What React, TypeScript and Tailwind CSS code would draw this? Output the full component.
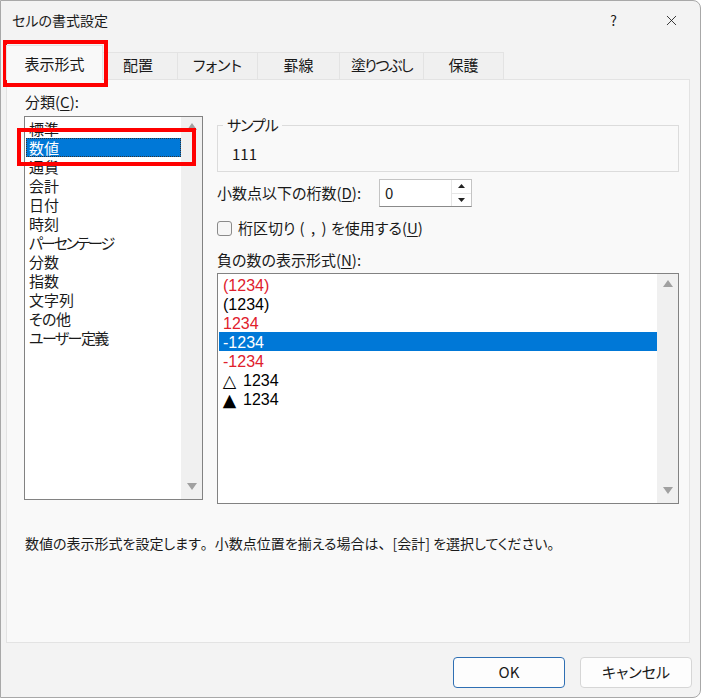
import { X } from "lucide-react"

const font = "font-['Noto_Sans_CJK_JP','Noto_Sans',sans-serif] [font-feature-settings:'palt']"

const tabs = [
  { label: "配置", w: "w-[75px]", track: "pr-[4px]" },
  { label: "フォント", w: "w-[80px]", track: "" },
  { label: "罫線", w: "w-[82px]", track: "" },
  { label: "塗りつぶし", w: "w-[84px]", track: "tracking-[-1.5px]" },
  { label: "保護", w: "w-[80px]", track: "" },
]

const categories = [
  { label: "標準", track: "" },
  { label: "数値", track: "" },
  { label: "通貨", track: "" },
  { label: "会計", track: "" },
  { label: "日付", track: "" },
  { label: "時刻", track: "" },
  { label: "パーセンテージ", track: "tracking-[-2.2px]" },
  { label: "分数", track: "" },
  { label: "指数", track: "" },
  { label: "文字列", track: "" },
  { label: "その他", track: "tracking-[-0.5px]" },
  { label: "ユーザー定義", track: "tracking-[-1.6px]" },
]

const negatives = [
  { mark: "", text: "(1234)", red: true },
  { mark: "", text: "(1234)", red: false },
  { mark: "", text: "1234", red: true },
  { mark: "", text: "-1234", red: false, selected: true },
  { mark: "", text: "-1234", red: true },
  { mark: "△", text: "1234", red: false },
  { mark: "▲", text: "1234", red: false },
]

function ScrollArrow({ down }: { down?: boolean }) {
  return (
    <svg width="10" height="7" viewBox="0 0 10 7">
      {down ? <path d="M0 0 L10 0 L5 7 Z" fill="#a0a0a0" /> : <path d="M0 7 L10 7 L5 0 Z" fill="#a0a0a0" />}
    </svg>
  )
}

function Scrollbar() {
  return (
    <div className="w-[21px] shrink-0 bg-[#f0f0f0] flex flex-col items-center justify-between pt-[6px] pb-[9px]">
      <ScrollArrow />
      <ScrollArrow down />
    </div>
  )
}

function Full({ children }: { children: string }) {
  return <span className="[font-feature-settings:normal]">{children}</span>
}

export default function App() {
  return (
    <div className={`${font} relative w-[701px] h-[698px] bg-[#f3f3f3] border border-[#a8a8a8] rounded-r-[8px] text-[#1a1a1a] flex flex-col overflow-hidden`}>
      {/* Title bar */}
      <div className="h-[38px] flex items-center pl-[11px] pr-[20px]">
        <span className="text-[14px]">セルの書式設定</span>
        <span className="ml-auto text-[14px] mr-[46px]">?</span>
        <X className="w-[17px] h-[17px]" strokeWidth={1.2} />
      </div>

      {/* Tabs */}
      <div className="mt-[6px] ml-[5px] flex items-end -mb-px h-[35px]">
        <div className="relative z-10 w-[97px] h-[35px] bg-[#f9f9f9] border border-b-0 border-[#e3e3e3] flex items-center justify-center pt-[3px] text-[15px]">
          表示形式
        </div>
        {tabs.map((t) => (
          <div
            key={t.label}
            className={`${t.w} ${t.track} h-[28px] bg-[#f0f0f0] border-t border-r border-[#e3e3e3] flex items-center justify-center pb-[2px] text-[15px]`}
          >
            {t.label}
          </div>
        ))}
      </div>

      {/* Panel */}
      <div className="ml-[5px] w-[684px] h-[564px] bg-[#f9f9f9] border border-[#e3e3e3] pl-[17px] pr-[10px] pt-[11px]">
        <div className="flex gap-[14px]">
          {/* Category column */}
          <div className="w-[179px] shrink-0">
            <div className="h-[22px] flex items-center pl-[1px] text-[15px]">
              分類(<span className="underline underline-offset-2">C</span>):
            </div>
            <div className="mt-[3px] h-[384px] bg-white border border-[#828282] flex">
              <div className="flex-1 pt-[2px] pl-[1px]">
                {categories.map((c) => (
                  <div
                    key={c.label}
                    className={`h-[19px] pl-[3px] flex items-center text-[15px] leading-none ${c.track} ${
                      c.label === "数値" ? "bg-[#0078d7] text-white outline-1 outline-dotted outline-[#333] -outline-offset-1" : ""
                    }`}
                  >
                    {c.label}
                  </div>
                ))}
              </div>
              <Scrollbar />
            </div>
          </div>

          {/* Right column */}
          <div className="w-[462px] shrink-0">
            <fieldset className="mt-[25px] h-[56px] border border-[#dcdcdc]">
              <legend className="ml-[5px] px-[4px] text-[15px] leading-[18px] tracking-[-1px]">サンプル</legend>
              <div className="mt-[12px] pl-[14px] text-[15px] leading-none">111</div>
            </fieldset>

            <div className="mt-[7px] flex items-center">
              <span className="w-[162px] text-[15px]">
                小数点以下の桁数(<span className="underline underline-offset-2">D</span>):
              </span>
              <div className="w-[93px] h-[28px] bg-white border border-[#c4c4c4] border-b-[#8a8a8a] flex items-center">
                <span className="flex-1 pl-[5px] text-[15px]">0</span>
                <div className="w-[20px] h-full flex flex-col border-l border-[#e6e6e6]">
                  <div className="flex-1 flex items-center justify-center border-b border-[#e6e6e6]">
                    <svg width="7" height="4" viewBox="0 0 7 4"><path d="M0 4 L7 4 L3.5 0 Z" fill="#222" /></svg>
                  </div>
                  <div className="flex-1 flex items-center justify-center">
                    <svg width="7" height="4" viewBox="0 0 7 4"><path d="M0 0 L7 0 L3.5 4 Z" fill="#222" /></svg>
                  </div>
                </div>
              </div>
            </div>

            <div className="mt-[10px] h-[22px] flex items-center gap-[6px]">
              <div className="w-[15px] h-[15px] rounded-[3px] border border-[#8a8a8a] bg-[#f6f6f6]" />
              <span className="text-[15px]">
                桁区切り<span className="ml-[4px] mr-[3px] tracking-[1.5px]">( , )</span>を使用する(<span className="underline underline-offset-2">U</span>)
              </span>
            </div>

            <div className="mt-[10px] h-[22px] flex items-center text-[15px]">
              負の数の表示形式(<span className="underline underline-offset-2">N</span>):
            </div>

            <div className="mt-[2px] h-[231px] bg-white border border-[#828282] flex">
              <div className="flex-1 pt-[1px] pl-[1px]">
                {negatives.map((n, i) => (
                  <div
                    key={i}
                    className={`h-[19px] pl-[4px] pt-[2px] flex items-center font-['Liberation_Sans','Noto_Sans_CJK_JP',sans-serif] text-[16px] leading-none ${
                      n.selected ? "bg-[#0078d7] text-white" : n.red ? "text-[#e0202c]" : "text-black"
                    }`}
                  >
                    {n.mark && (
                      <span className="inline-block w-[13px] text-center font-['DejaVu_Sans',sans-serif] text-[13px] scale-[1.35] mr-[7px]">
                        {n.mark}
                      </span>
                    )}
                    {n.text}
                  </div>
                ))}
              </div>
              <Scrollbar />
            </div>
          </div>
        </div>

        <p className="mt-[29px] pl-[1px] text-[14px] leading-[20px]">
          数値の表示形式を設定します<Full>。</Full>小数点位置を揃える場合は<Full>、</Full>[会計] を選択してください。
        </p>
      </div>

      {/* Buttons */}
      <div className="mt-[14px] flex justify-end gap-[15px] pr-[8px]">
        <button className="w-[112px] h-[31px] bg-[#fdfdfd] border border-[#2f6fb3] rounded-[4px] text-[15px]">
          OK
        </button>
        <button className="w-[112px] h-[31px] bg-[#fdfdfd] border border-[#d6d6d6] rounded-[4px] text-[15px]">
          キャンセル
        </button>
      </div>

      {/* Annotation boxes */}
      <div className="absolute left-[2px] top-[39px] w-[105px] h-[47px] border-[4px] border-[#ff0000]" />
      <div className="absolute left-[16px] top-[127px] w-[179px] h-[38px] border-[4px] border-[#ff0000]" />
    </div>
  )
}
